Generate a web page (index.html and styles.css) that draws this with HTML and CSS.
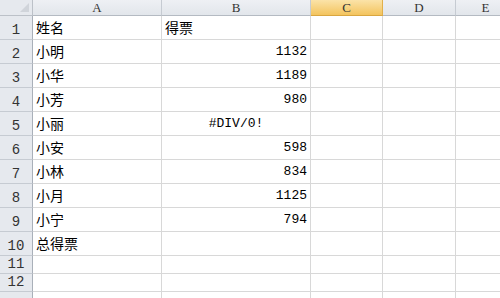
FILE: index.html
```html
<!DOCTYPE html>
<html lang="zh">
	<head>
		<meta charset="utf-8">
		<title>得票</title>
		<link rel="stylesheet" href="styles.css">
	</head>
	<body>
		<div class="sheet">
			<div class="corner"><span class="tri"></span></div>
			<div class="colhead">A</div>
			<div class="colhead">B</div>
			<div class="colhead active">C</div>
			<div class="colhead">D</div>
			<div class="colhead">E</div>

			<div class="rowhead">1</div>
			<div class="cell">姓名</div><div class="cell">得票</div><div class="cell"></div><div class="cell"></div><div class="cell"></div>

			<div class="rowhead">2</div>
			<div class="cell">小明</div><div class="cell num">1132</div><div class="cell"></div><div class="cell"></div><div class="cell"></div>

			<div class="rowhead">3</div>
			<div class="cell">小华</div><div class="cell num">1189</div><div class="cell"></div><div class="cell"></div><div class="cell"></div>

			<div class="rowhead">4</div>
			<div class="cell">小芳</div><div class="cell num">980</div><div class="cell"></div><div class="cell"></div><div class="cell"></div>

			<div class="rowhead">5</div>
			<div class="cell">小丽</div><div class="cell num err">#DIV/0!</div><div class="cell"></div><div class="cell"></div><div class="cell"></div>

			<div class="rowhead">6</div>
			<div class="cell">小安</div><div class="cell num">598</div><div class="cell"></div><div class="cell"></div><div class="cell"></div>

			<div class="rowhead">7</div>
			<div class="cell">小林</div><div class="cell num">834</div><div class="cell"></div><div class="cell"></div><div class="cell"></div>

			<div class="rowhead">8</div>
			<div class="cell">小月</div><div class="cell num">1125</div><div class="cell"></div><div class="cell"></div><div class="cell"></div>

			<div class="rowhead">9</div>
			<div class="cell">小宁</div><div class="cell num">794</div><div class="cell"></div><div class="cell"></div><div class="cell"></div>

			<div class="rowhead">10</div>
			<div class="cell">总得票</div><div class="cell"></div><div class="cell"></div><div class="cell"></div><div class="cell"></div>

			<div class="rowhead">11</div>
			<div class="cell"></div><div class="cell"></div><div class="cell"></div><div class="cell"></div><div class="cell"></div>

			<div class="rowhead">12</div>
			<div class="cell"></div><div class="cell"></div><div class="cell"></div><div class="cell"></div><div class="cell"></div>

			<div class="rowhead"></div>
			<div class="cell"></div><div class="cell"></div><div class="cell"></div><div class="cell"></div><div class="cell"></div>
		</div>
	</body>
</html>
```

FILE: styles.css
```css
body {
	margin: 0;
	background: #fff;
	overflow: hidden;
}

.sheet {
	display: grid;
	grid-template-columns: 33px 129px 149px 72px 73px 60px;
	grid-template-rows: 16px repeat(10, 24px) 18px 18px 18px;
	font-family: "Noto Sans CJK SC", sans-serif;
	font-size: 14px;
	color: #000;
}

.sheet > div {
	box-sizing: border-box;
	overflow: hidden;
	white-space: nowrap;
}

.corner {
	position: relative;
	background: #e6e9ee;
	border-right: 1px solid #bcc1c8;
	border-bottom: 1px solid #bcc1c8;
}

.tri {
	position: absolute;
	right: 3px;
	bottom: 3px;
	width: 0;
	height: 0;
	border-left: 9px solid transparent;
	border-bottom: 9px solid #d0d4da;
}

.colhead {
	background: linear-gradient(#eef0f4, #e2e6eb);
	border-right: 1px solid #c6cbd2;
	border-bottom: 1px solid #b4bac2;
	font-family: "Liberation Serif", serif;
	font-size: 13px;
	color: #333;
	text-align: center;
	line-height: 16px;
}

.colhead.active {
	background: linear-gradient(#fbe3a8, #f3c45e);
	border-right-color: #e2b04a;
	border-bottom-color: #d9a640;
}

.rowhead {
	display: flex;
	align-items: flex-end;
	justify-content: center;
	padding-bottom: 1px;
	background: #e6e9ee;
	border-right: 1px solid #a9b0b9;
	border-bottom: 1px solid #c6cbd2;
	font-family: "Liberation Mono", monospace;
	font-size: 14px;
	color: #333;
	line-height: 16px;
}

.cell {
	display: flex;
	align-items: flex-end;
	padding: 0 3px 3px 3px;
	border-right: 1px solid #d8d8d8;
	border-bottom: 1px solid #d8d8d8;
	line-height: 17px;
}

.num {
	justify-content: flex-end;
	font-family: "Liberation Mono", monospace;
	font-size: 13px;
	line-height: 15px;
	padding-bottom: 4px;
}

.num.err {
	justify-content: center;
}
```
